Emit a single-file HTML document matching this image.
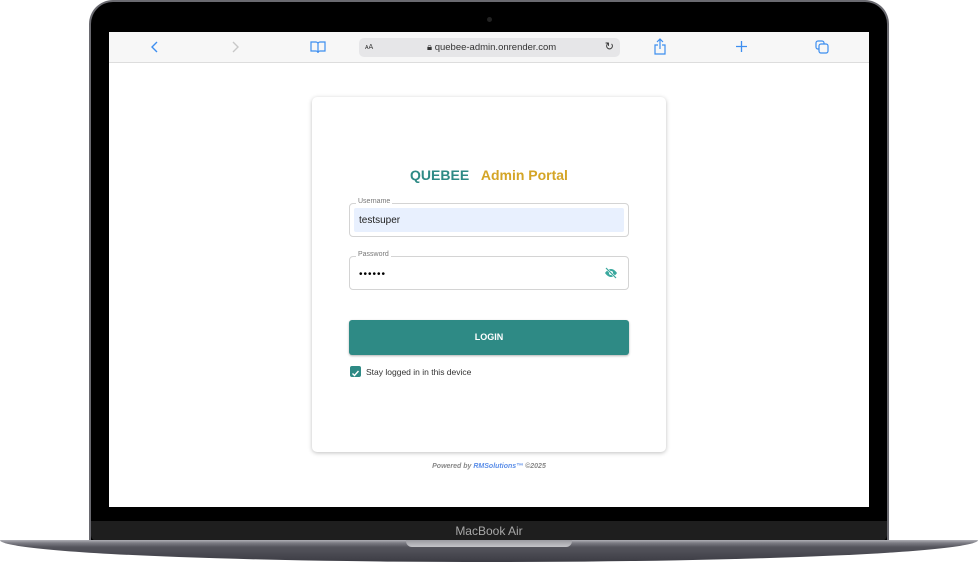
<!DOCTYPE html>
<html><head><meta charset="utf-8"><style>
*{margin:0;padding:0;box-sizing:border-box}
body{width:978px;height:562px;background:#fff;position:relative;overflow:hidden;font-family:"Liberation Sans",sans-serif}
.bezel{position:absolute;left:89px;top:0;width:800px;height:542px;background:#000;border-radius:24px 24px 0 0;border:2px solid #6a6a70;border-bottom:none}
.cam{position:absolute;left:487px;top:17px;width:5px;height:5px;border-radius:50%;background:#222}
.chin{position:absolute;left:91px;top:521px;width:796px;height:20px;background:#1e1e1e;border-radius:0 0 6px 6px;color:#a8a8a8;font-size:12px;text-align:center;line-height:21px}
.base{position:absolute;left:0;top:540px;width:978px;height:22px;background:linear-gradient(#b0b0b6 0,#7c7c84 3px,#55555d 7px,#3c3c44 22px);border-radius:0 0 50% 50%/0 0 100% 100%}
.notch{position:absolute;left:406px;top:540px;width:166px;height:7px;background:linear-gradient(#9a9aa0,#c4c4c8);border-radius:0 0 6px 6px}
.screen{position:absolute;left:109px;top:32px;width:760px;height:475px;background:#fff}
.bar{height:31px;background:#f7f7f7;border-bottom:1px solid #ddd;position:relative}
.url{position:absolute;left:250px;top:6px;width:261px;height:19px;background:#e6e6e8;border-radius:5px;font-size:9.5px;color:#333;line-height:19px}
.ic{position:absolute;top:8px}
.card{position:absolute;left:203px;top:65px;width:354px;height:355px;background:#fff;border-radius:5px;box-shadow:0 1px 4px rgba(0,0,0,.25)}
.title{position:absolute;top:70px;width:100%;text-align:center;font-weight:bold;font-size:14px}
.field{position:absolute;left:37px;width:280px;height:34px;border:1px solid #d4d4d4;border-radius:4px}
.lab{position:absolute;left:6px;top:-6px;background:#fff;font-size:7px;color:#777;padding:0 2px}
.btn{position:absolute;left:37px;top:223px;width:280px;height:35px;background:#2e8a85;border-radius:3px;color:#fff;font-size:9px;font-weight:bold;text-align:center;line-height:35px;box-shadow:0 1px 2px rgba(0,0,0,.3)}
</style></head><body>
<div class="bezel"></div><div class="cam"></div>
<div class="screen">
 <div class="bar">
  <svg class="ic" style="left:40px" width="12" height="14" viewBox="0 0 12 14"><path d="M8 2L3 7l5 5" stroke="#3d8ef0" stroke-width="1.4" fill="none"/></svg>
  <svg class="ic" style="left:120px" width="12" height="14" viewBox="0 0 12 14"><path d="M4 2l5 5-5 5" stroke="#c8c8c8" stroke-width="1.4" fill="none"/></svg>
  <svg class="ic" style="left:201px" width="16" height="14" viewBox="0 0 16 14"><path d="M1 2h5a2 2 0 0 1 2 2v9a2 2 0 0 0-2-2H1zM15 2h-5a2 2 0 0 0-2 2v9a2 2 0 0 1 2-2h5z" stroke="#3d8ef0" stroke-width="1.2" fill="none"/></svg>
  <div class="url"><span style="position:absolute;left:6px;font-size:7px">ᴀA</span><span style="position:absolute;left:68px">🔒︎ quebee-admin.onrender.com</span><span style="position:absolute;right:6px;font-size:11px">↻</span></div>
  <svg class="ic" style="left:545px;top:6px" width="12" height="17" viewBox="0 0 12 17"><path d="M6 1v10M3 4l3-3 3 3M4 7H1v9h10V7H8" stroke="#3d8ef0" stroke-width="1.2" fill="none"/></svg>
  <svg class="ic" style="left:626px" width="13" height="13" viewBox="0 0 13 13"><path d="M6.5 1v11M1 6.5h11" stroke="#3d8ef0" stroke-width="1.3"/></svg>
  <svg class="ic" style="left:706px" width="14" height="14" viewBox="0 0 14 14"><rect x="1" y="1" width="8" height="8" rx="2" stroke="#3d8ef0" stroke-width="1.2" fill="none"/><rect x="4" y="4" width="9" height="9" rx="2" stroke="#3d8ef0" stroke-width="1.2" fill="#f7f7f7"/></svg>
 </div>
 <div class="card">
  <div class="title"><span style="color:#2e8a85">QUEBEE</span>&nbsp;&nbsp;&nbsp;<span style="color:#d4a526">Admin Portal</span></div>
  <div class="field" style="top:106px"><div class="lab">Username</div><div style="position:absolute;left:4px;top:4px;right:4px;bottom:4px;background:#e8f0fe;border-radius:2px;font-size:10px;color:#222;line-height:26px;padding-left:5px">testsuper</div></div>
  <div class="field" style="top:159px"><div class="lab">Password</div><div style="position:absolute;left:9px;top:12px;font-size:10px;letter-spacing:1px">••••••</div>
   <svg style="position:absolute;right:10px;top:10px" width="14" height="12" viewBox="0 0 14 12"><path d="M1 6s2.5-4 6-4 6 4 6 4-2.5 4-6 4-6-4-6-4z" fill="#3aa89e"/><circle cx="7" cy="6" r="2" fill="#fff"/><path d="M2 1l10 10" stroke="#fff" stroke-width="2.2"/><path d="M2 1l10 10" stroke="#3aa89e" stroke-width="1.2"/></svg></div>
  <div class="btn">LOGIN</div>
  <div style="position:absolute;left:38px;top:269px;width:11px;height:11px;background:#2e8a85;border-radius:2px"><svg width="11" height="11" viewBox="0 0 11 11"><path d="M2.5 5.5l2 2 4-4.5" stroke="#fff" stroke-width="1.4" fill="none"/></svg></div>
  <div style="position:absolute;left:54px;top:270px;font-size:8.5px;color:#333">Stay logged in in this device</div>
 </div>
 <div style="position:absolute;top:430px;width:100%;text-align:center;font-size:7px;font-style:italic;font-weight:bold;color:#888;padding-top:1px">Powered by <span style="color:#5b8ee8">RMSolutions™</span> ©2025</div>
</div>
<div class="chin">MacBook Air</div>
<div class="base"></div><div class="notch"></div>
</body></html>
